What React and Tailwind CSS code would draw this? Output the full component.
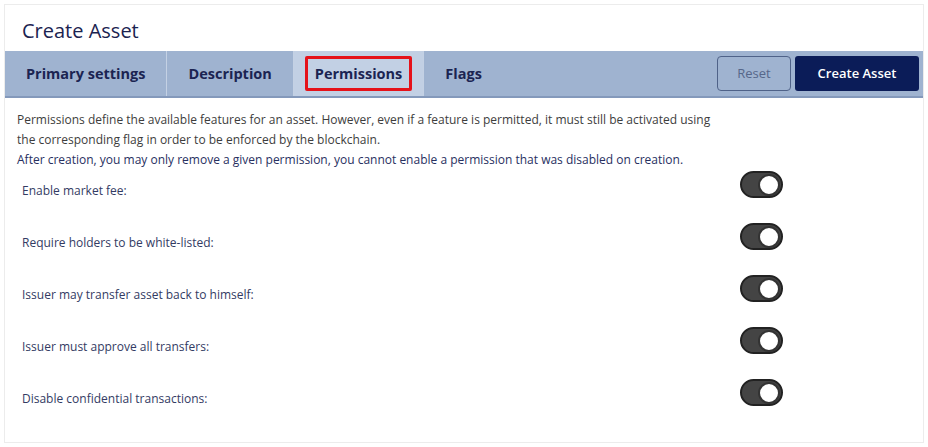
import React, { useState } from "react";

const tabs = ["Primary settings", "Description", "Permissions", "Flags"];

const permissions = [
  "Enable market fee:",
  "Require holders to be white-listed:",
  "Issuer may transfer asset back to himself:",
  "Issuer must approve all transfers:",
  "Disable confidential transactions:",
];

const Toggle = ({ on, onClick }) => (
  <button
    type="button"
    onClick={onClick}
    className={`flex h-[27px] w-[43px] items-center rounded-full border-2 border-[#222] px-[1px] ${
      on ? "justify-end bg-[#444]" : "justify-start bg-[#ccc]"
    }`}
  >
    <span className="block h-[22px] w-[22px] rounded-full border-2 border-[#333] bg-white" />
  </button>
);

const App = () => {
  const [active, setActive] = useState("Permissions");
  const [values, setValues] = useState(permissions.map(() => true));

  return (
    <div className="min-h-[447px] bg-white p-1 font-['Open_Sans',sans-serif]">
      <div className="h-[439px] w-[920px] border border-[#ececec] bg-white">
        {/* Header */}
        <h1 className="px-[17px] pt-[12px] pb-[7px] text-[20px] leading-[27px] text-[#1b2350]">
          Create Asset
        </h1>

        {/* Tabs */}
        <div className="flex h-[47px] items-stretch border-b-2 border-[#8499bb] bg-[#9fb3d0]">
          {tabs.map((tab) => (
            <button
              key={tab}
              onClick={() => setActive(tab)}
              className={`flex items-center border-r border-[#c4d1e4] px-[21px] text-[14.5px] font-bold text-[#1b2452] ${
                active === tab ? "bg-[#c2d0e4]" : ""
              } ${tab === "Flags" ? "border-r-0" : ""}`}
            >
              {tab === "Permissions" ? (
                <span className="-mx-[10px] rounded-[2px] border-[3px] border-[#e5121a] px-[7px] py-[4px] leading-[21px]">
                  {tab}
                </span>
              ) : (
                tab
              )}
            </button>
          ))}
          <div className="ml-auto flex items-center gap-1 pr-1">
            <button className="h-[35px] w-[74px] rounded-[4px] border border-[#4f6288] text-[13px] text-[#56678a]">
              Reset
            </button>
            <button className="h-[35px] w-[124px] rounded-[3px] bg-[#0b1c58] text-[13px] font-semibold text-white">
              Create Asset
            </button>
          </div>
        </div>

        {/* Content */}
        <div className="px-[12px] pt-[12px]">
          <p className="w-[700px] text-[12px] leading-[20px] text-[#3d3d3d]">
            Permissions define the available features for an asset. However,
            even if a feature is permitted, it must still be activated using
            the corresponding flag in order to be enforced by the blockchain.
          </p>
          <p className="text-[12px] leading-[20px] text-[#28305f]">
            After creation, you may only remove a given permission, you cannot
            enable a permission that was disabled on creation.
          </p>

          <div className="mt-[1px] flex flex-col gap-[25px]">
            {permissions.map((label, i) => (
              <div key={label} className="flex h-[27px] items-center">
                <span className="w-[723px] pl-[5px] pt-[13px] text-[12px] text-[#333b63]">
                  {label}
                </span>
                <Toggle
                  on={values[i]}
                  onClick={() =>
                    setValues(values.map((v, j) => (j === i ? !v : v)))
                  }
                />
              </div>
            ))}
          </div>
        </div>
      </div>
    </div>
  );
};

export default App;
